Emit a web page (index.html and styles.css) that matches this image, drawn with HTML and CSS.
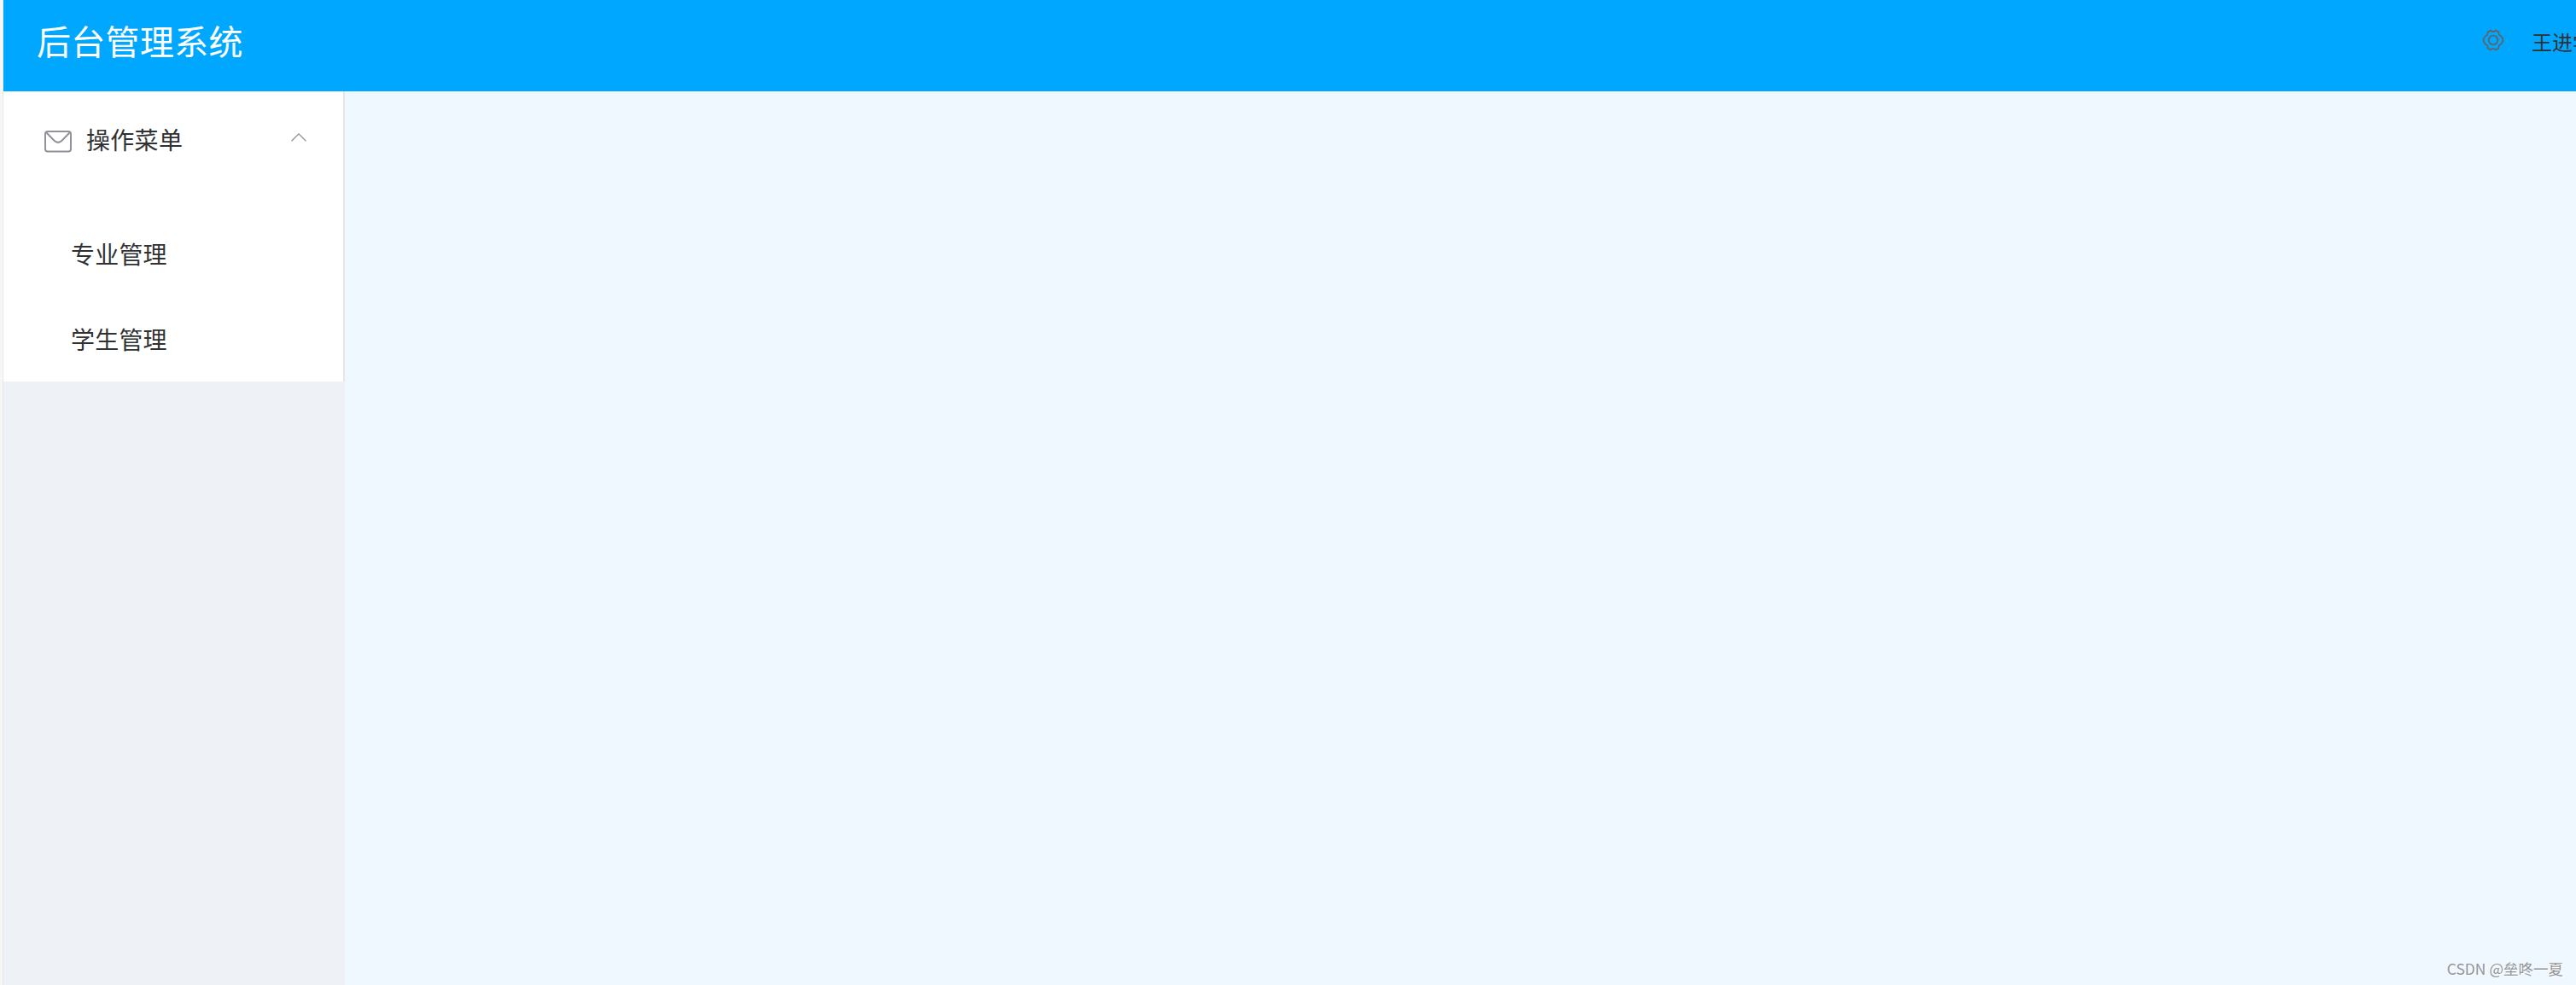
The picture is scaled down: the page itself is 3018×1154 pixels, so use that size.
FILE: index.html
```html
<!DOCTYPE html>
<html lang="zh-CN">
<head>
<meta charset="utf-8">
<title>后台管理系统</title>
<link rel="stylesheet" href="styles.css">
</head>
<body>
<div class="app">
  <header class="header">
    <h1 class="title">后台管理系统</h1>
    <div class="user">
      <svg class="gear" viewBox="0 0 26 26">
        <path d="M10 1.7 Q13 4.3 16 1.7 L19.4 3.5 Q18.7 7.2 22.5 8.5 Q22.6 10.2 24.3 11 V15 Q22.6 15.8 22.5 17.5 Q18.7 18.8 19.4 22.5 L16 24.3 Q13 21.7 10 24.3 L6.6 22.5 Q7.3 18.8 3.5 17.5 Q3.4 15.8 1.7 15 V11 Q3.4 10.2 3.5 8.5 Q7.3 7.2 6.6 3.5 Z"/>
        <circle cx="13" cy="13" r="5.3"/>
      </svg>
      <span class="name">王进学</span>
    </div>
  </header>
  <div class="body">
    <aside class="aside">
      <nav class="menu">
        <div class="submenu">
          <svg class="mail" viewBox="0 0 32 26">
            <rect x="1" y="1" width="30" height="23.4" rx="3"/>
            <path d="M2 2 L11.5 11.8 Q16 16 20.5 11.8 L30 2"/>
          </svg>
          <span class="label">操作菜单</span>
          <svg class="arrow" viewBox="0 0 18 10"><path d="M.6 9.2 L9 .8 L17.4 9.2"/></svg>
        </div>
        <ul class="items">
          <li class="item">专业管理</li>
          <li class="item">学生管理</li>
        </ul>
      </nav>
    </aside>
    <main class="main"><span class="watermark">CSDN @垒咚一夏</span></main>
  </div>
</div>
</body>
</html>
```
FILE: styles.css
```css
* { box-sizing: border-box; }
body {
  margin: 0;
  overflow: hidden;
  background: #f7f7f7;
  color: #303133;
  font-family: "Noto Sans CJK SC", sans-serif;
  font-weight: 400;
}
.app {
  display: flex;
  flex-direction: column;
  height: 1154px;
  margin-left: 3px;
  border-left: 1px solid #e6e6e6;
}
.header {
  display: flex;
  justify-content: space-between;
  flex: 0 0 107px;
  padding-left: 39px;
  background: #00a7ff;
}
.title {
  margin: 0;
  color: #fff;
  font-size: 40px;
  font-weight: 400;
  line-height: 95px;
  letter-spacing: .3px;
}
.user {
  display: flex;
  flex: 0 0 110px;
  overflow: hidden;
  white-space: nowrap;
}
.gear {
  flex: none;
  width: 26px;
  height: 26px;
  margin-top: 34px;
  fill: none;
  stroke: #606266;
  stroke-width: 1.8;
}
.name {
  margin-left: 32px;
  font-size: 24px;
  line-height: 98px;
}
.body { display: flex; flex: 1; }
.aside { flex: 0 0 400px; background: #eef1f6; }
.menu {
  height: 340px;
  border-right: 2px solid #e6e6e6;
  background: #fff;
}
.submenu {
  display: flex;
  align-items: center;
  height: 112px;
  padding: 0 43px 0 48px;
  font-size: 28px;
}
.mail {
  width: 32px;
  height: 26px;
  margin-top: 6px;
  fill: none;
  stroke: #909399;
  stroke-width: 2;
}
.label { margin-left: 17px; letter-spacing: .3px; }
.arrow {
  width: 18px;
  height: 10px;
  margin: -4px 0 0 auto;
  fill: none;
  stroke: #909399;
  stroke-width: 1.3;
}
.items {
  margin: 0;
  padding: 28px 0 0;
  list-style: none;
}
.item {
  height: 100px;
  padding-left: 79px;
  font-size: 28px;
  line-height: 100px;
  letter-spacing: .2px;
}
.main {
  display: flex;
  flex: 1;
  align-items: flex-end;
  justify-content: flex-end;
  padding: 0 15px 6px 0;
  background: #eff7ff;
}
.watermark {
  color: #929599;
  font-size: 17.5px;
  line-height: 26px;
  text-shadow: 1px 1px 0 #fff;
}
```
